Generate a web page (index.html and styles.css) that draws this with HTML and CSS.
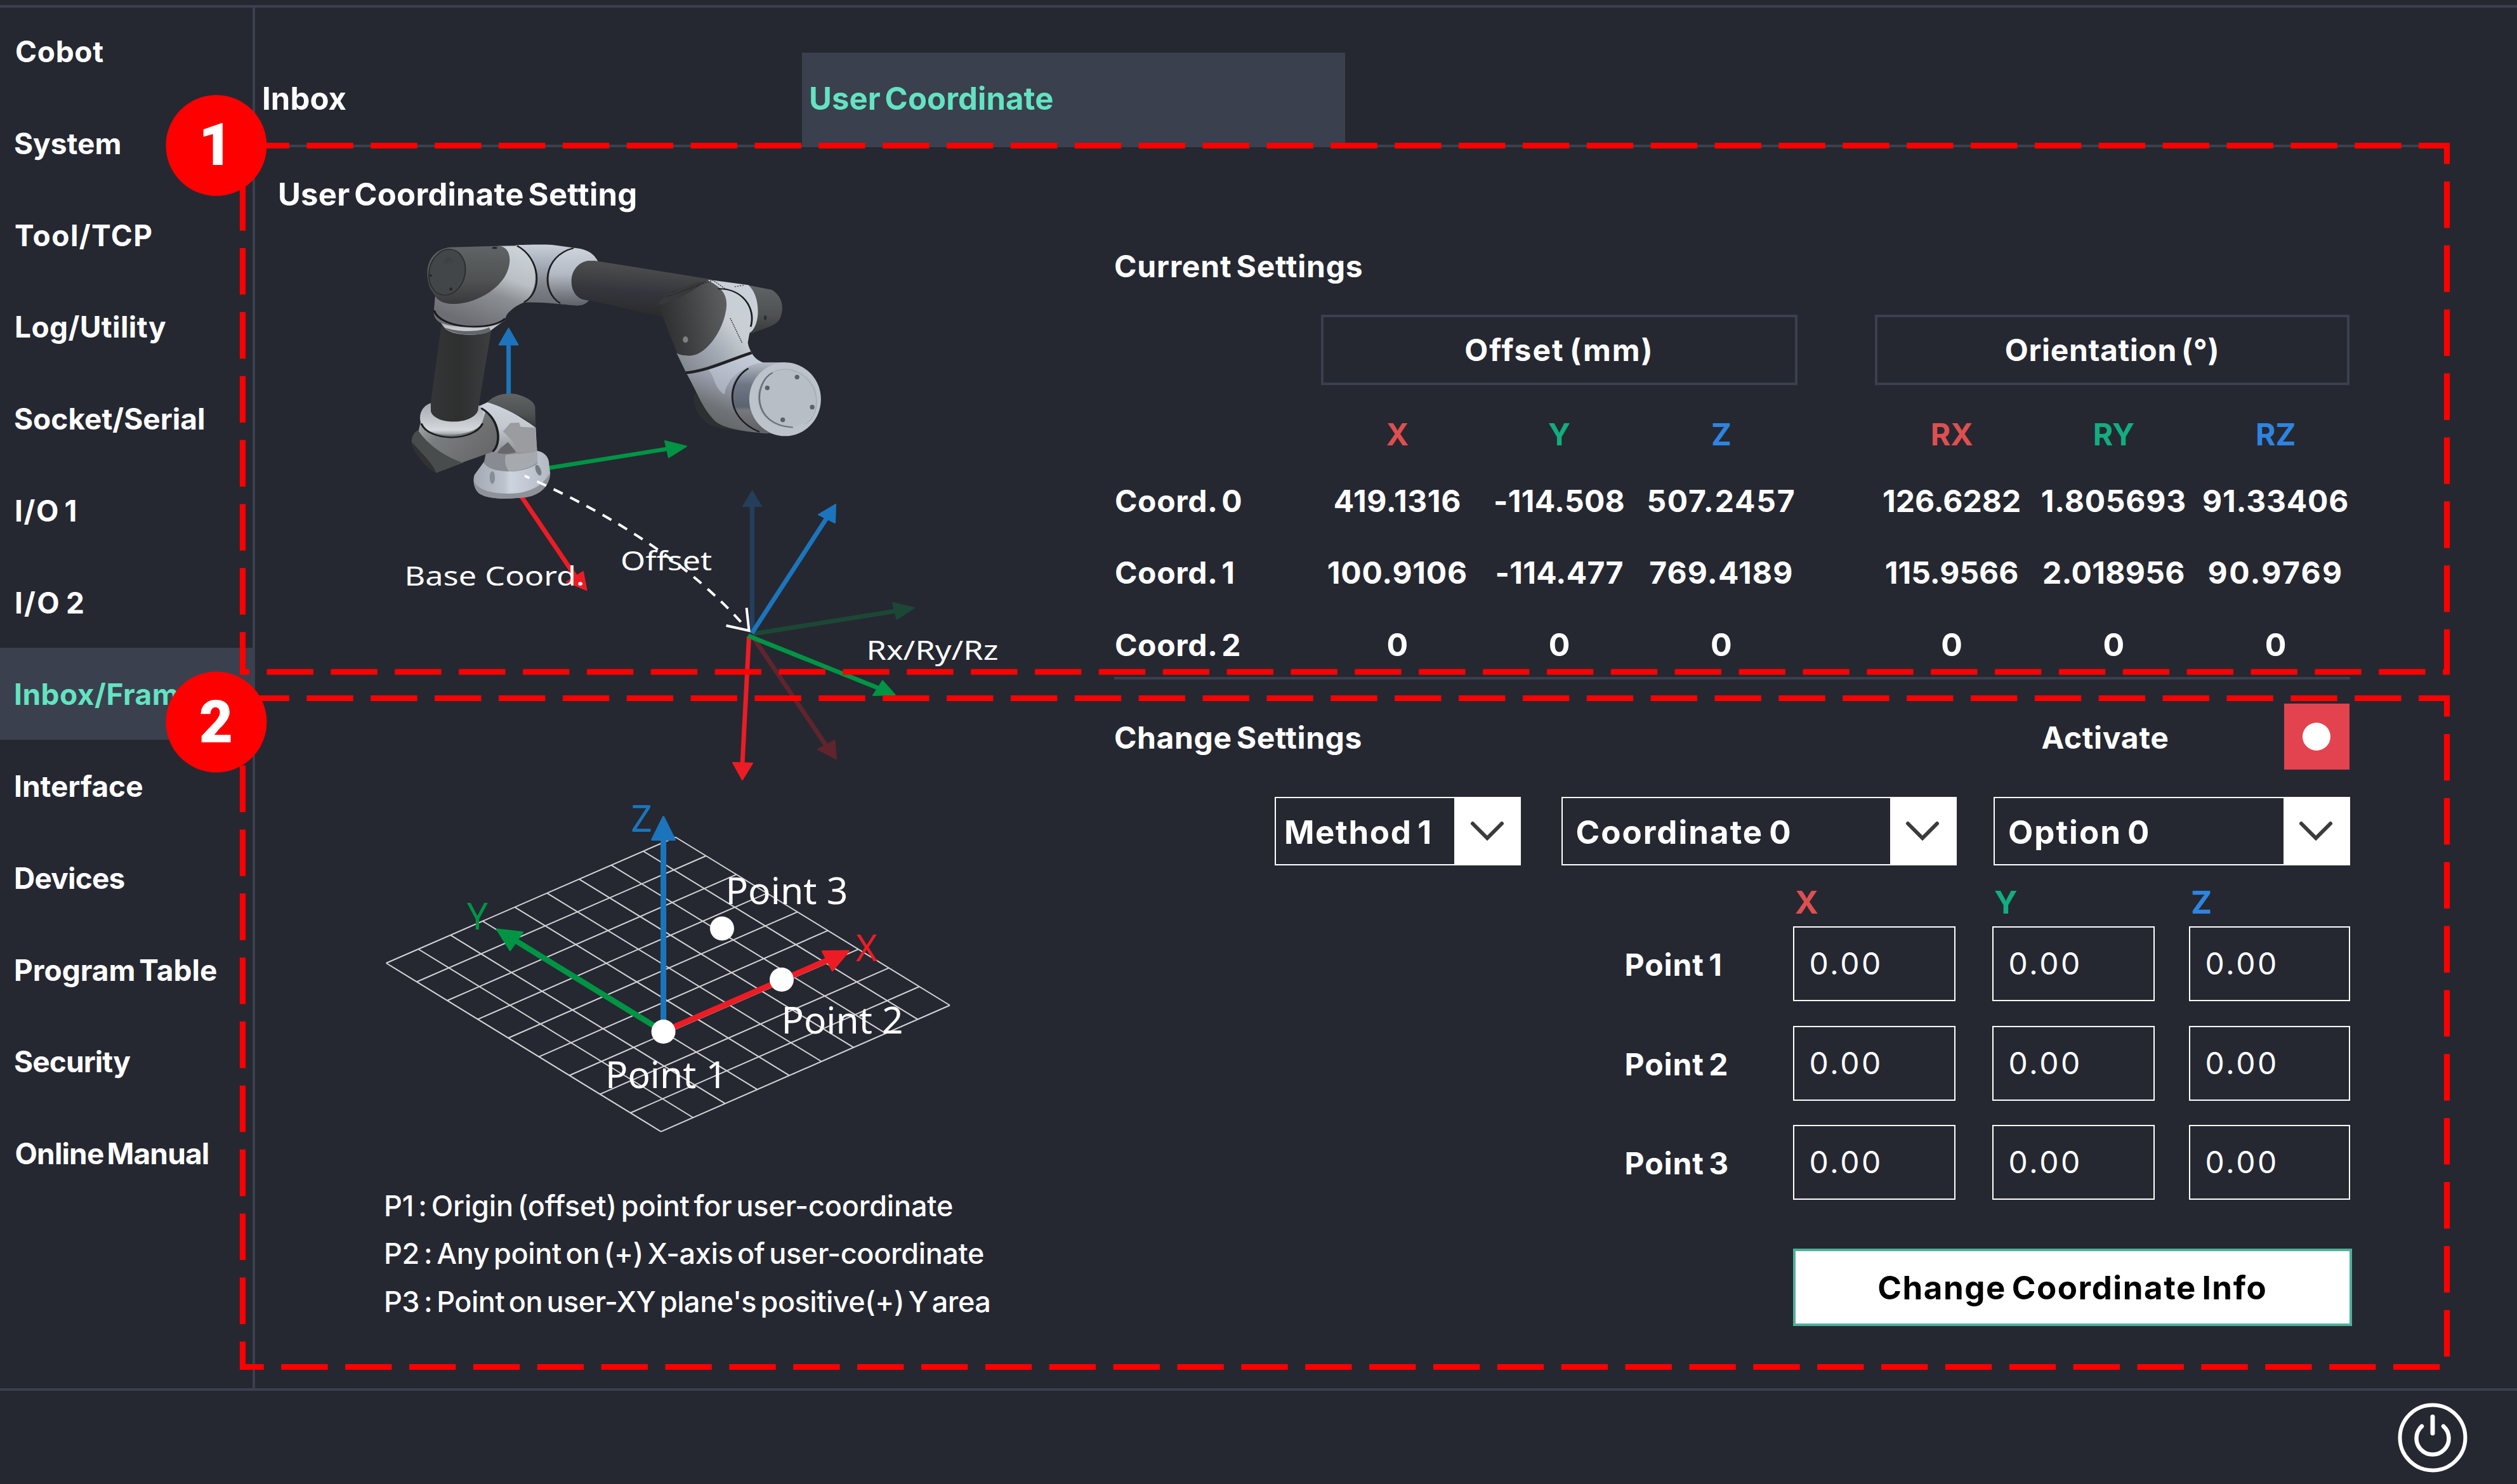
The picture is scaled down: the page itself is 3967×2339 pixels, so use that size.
FILE: index.html
```html
<!DOCTYPE html>
<html lang="en">
<head>
<meta charset="utf-8">
<title>User Coordinate Setting</title>
<link rel="stylesheet" href="styles.css">
</head>
<body>
<div class="topbar"></div>
<div class="main">
  <nav class="sidebar">
    <a>Cobot</a>
    <a>System</a>
    <a>Tool/TCP</a>
    <a>Log/Utility</a>
    <a>Socket/Serial</a>
    <a>I/O 1</a>
    <a>I/O 2</a>
    <a class="active">Inbox/Frame</a>
    <a>Interface</a>
    <a>Devices</a>
    <a>Program Table</a>
    <a>Security</a>
    <a>Online Manual</a>
  </nav>
  <section class="content">
    <div class="tabs">
      <div class="tab">Inbox</div>
      <div class="tab selected">User Coordinate</div>
    </div>
    <div class="panel">
      <div class="guide">
        <h1>User Coordinate Setting</h1>
        <svg class="frames" viewBox="402 340 1352 910" width="1352" height="910">
          <defs>
            <linearGradient id="tube" x1="0" y1="0" x2="1" y2="0"><stop offset="0" stop-color="#343637"/><stop offset=".45" stop-color="#2e2f2f"/><stop offset="1" stop-color="#3d3e3f"/></linearGradient>
            <linearGradient id="arm" x1=".55" y1="0" x2=".4" y2="1"><stop offset="0" stop-color="#505152"/><stop offset=".3" stop-color="#424345"/><stop offset=".55" stop-color="#34363d"/><stop offset="1" stop-color="#2a2a2b"/></linearGradient>
            <linearGradient id="joint" x1=".9" y1="0" x2=".45" y2="1"><stop offset="0" stop-color="#cfd6da"/><stop offset=".4" stop-color="#b9bfc4"/><stop offset=".62" stop-color="#8b8e92"/><stop offset="1" stop-color="#6c6e73"/></linearGradient>
            <linearGradient id="barrel" x1="0" y1="0" x2="0" y2="1"><stop offset="0" stop-color="#c9cfd8"/><stop offset=".3" stop-color="#aab0bb"/><stop offset=".7" stop-color="#7c8087"/><stop offset="1" stop-color="#6a6d72"/></linearGradient>
            <linearGradient id="collar" x1="0" y1="0" x2="0" y2="1"><stop offset="0" stop-color="#cdd3da"/><stop offset=".45" stop-color="#b4bac4"/><stop offset=".8" stop-color="#7b7e86"/><stop offset="1" stop-color="#606268"/></linearGradient>
            <linearGradient id="cap" x1="0" y1="0" x2="0" y2="1"><stop offset="0" stop-color="#606466"/><stop offset=".6" stop-color="#4f5152"/><stop offset="1" stop-color="#37393a"/></linearGradient>
            <linearGradient id="capSide" x1="0" y1=".6" x2="1" y2=".4"><stop offset="0" stop-color="#2b2c2d"/><stop offset=".45" stop-color="#3f4142"/><stop offset="1" stop-color="#5c5e60"/></linearGradient>
            <linearGradient id="wrist" x1="0" y1="1" x2="1" y2="0"><stop offset="0" stop-color="#7c8088"/><stop offset=".35" stop-color="#a3a9b3"/><stop offset=".6" stop-color="#c8ced3"/><stop offset="1" stop-color="#ccd2dc"/></linearGradient>
            <linearGradient id="hand" x1=".7" y1="0" x2=".3" y2="1"><stop offset="0" stop-color="#c6ced9"/><stop offset=".4" stop-color="#959ba8"/><stop offset=".7" stop-color="#6f7276"/><stop offset="1" stop-color="#5f6164"/></linearGradient>
            <linearGradient id="flange" x1="0" y1="0" x2="0" y2="1"><stop offset="0" stop-color="#b4bac5"/><stop offset=".3" stop-color="#6f7684"/><stop offset=".6" stop-color="#5c6370"/><stop offset=".65" stop-color="#76797d"/><stop offset="1" stop-color="#5a5c5f"/></linearGradient>
            <linearGradient id="ring" x1="0" y1="0" x2="0" y2="1"><stop offset="0" stop-color="#a6a9ad"/><stop offset=".6" stop-color="#c6cace"/><stop offset=".85" stop-color="#d5d8dc"/><stop offset="1" stop-color="#a0a3a6"/></linearGradient>
            <linearGradient id="shoulder" x1="0" y1="0" x2="1" y2=".6"><stop offset="0" stop-color="#b3b6ba"/><stop offset=".4" stop-color="#7a7d7f"/><stop offset="1" stop-color="#66686a"/></linearGradient>
            <linearGradient id="body" x1="0" y1="0" x2="0" y2="1"><stop offset="0" stop-color="#cfd5dd"/><stop offset=".5" stop-color="#c3c8ce"/><stop offset="1" stop-color="#8c8f93"/></linearGradient>
            <linearGradient id="foot" x1="0" y1="0" x2="1" y2="0"><stop offset="0" stop-color="#a4a9b2"/><stop offset=".4" stop-color="#bcc3cd"/><stop offset=".48" stop-color="#ccd4df"/><stop offset="1" stop-color="#b3b9c3"/></linearGradient>
          </defs>

          <!-- base frame axes -->
          <path d="M801.6 625V540" stroke="#1c75bc" stroke-width="7"/>
          <path d="M801.6 517.500L816.500 543.500H786.700Z" fill="#1c75bc" stroke="#1c75bc" stroke-width="2" stroke-linejoin="round"/>
          <path d="M862 738L1052 707.500" stroke="#009444" stroke-width="6.500"/>
          <path d="M1082 703.500L1048 695L1054 721Z" fill="#009444" stroke="#009444" stroke-width="2" stroke-linejoin="round"/>
          <path d="M820 780L908 910" stroke="#ed1c24" stroke-width="7"/>
          <path d="M924.500 930L919 901L893 917Z" fill="#ed1c24" stroke="#ed1c24" stroke-width="2" stroke-linejoin="round"/>

          <!-- robot arm -->
          <g transform="translate(600 350) scale(.4592 .3333)">
            <path fill="url(#tube)" d="M210 470L382 490L335 880C325 960 185 960 172 895V850Z"/>
            <path fill="url(#ring)" d="M200 465L222 505C255 542 350 542 378 512L428 462Z"/>
            <path fill="#63666a" d="M216 497C250 542 350 542 378 512L372 498C340 522 260 520 216 497Z"/>
            <path fill="url(#joint)" d="M404 113L470 112C545 160 550 320 494 378C465 395 445 415 432 440L426 462C360 505 240 500 205 476C188 462 182 445 182 425L187 350Z"/>
            <path fill="url(#barrel)" d="M462 110C500 106 560 106 590 108L665 122C715 128 733 155 746 187L712 183C640 200 640 340 692 366L714 372C700 390 690 396 665 394C610 388 560 378 494 380C545 320 550 170 462 110Z"/>
            <path fill="url(#collar)" d="M650 124C715 125 733 155 746 187L712 183C640 200 640 340 692 366L714 372C700 390 690 396 665 394L620 388C560 330 560 170 650 124Z"/>
            <path fill="none" stroke="#1b1c1e" stroke-width="6" d="M468 112C548 170 558 330 492 379M662 123C555 160 550 330 616 384"/>
            <path fill="none" stroke="#1b1c1e" stroke-width="8" d="M183 418C205 510 385 515 427 456"/>
            <path fill="url(#cap)" d="M238 119L408 113C450 120 452 200 425 260C385 345 300 392 245 387C215 385 195 370 187 350L170 315C140 200 180 128 238 119Z"/>
            <ellipse cx="228" cy="237" rx="62" ry="109" fill="#424648" stroke="#2a2c2d" stroke-width="4" transform="rotate(6 228 237)"/>
            <g fill="#242626"><ellipse cx="391" cy="122" rx="9" ry="5"/><ellipse cx="241" cy="317" rx="5" ry="7"/><ellipse cx="172" cy="253" rx="4" ry="6"/></g>
            <path fill="none" stroke="#2f3233" stroke-width="3" stroke-dasharray="4 5" d="M218 190C222 165 242 160 248 190M224 196L232 175L242 196"/>

            <path fill="url(#arm)" d="M712 183H735L1130 270L1000 330L962 446C880 425 800 392 690 363C640 335 640 200 712 183Z"/>
            <path fill="url(#cap)" d="M1255 297L1342 320C1368 340 1380 375 1378 415C1374 465 1362 480 1330 497L1266 530C1300 470 1302 350 1255 297Z"/>
            <path fill="url(#wrist)" d="M1125 272L1262 298C1305 350 1305 490 1266 525L1260 570C1262 590 1268 605 1274 620L1048 712L1016 620L1100 400Z"/>
            <path fill="url(#capSide)" d="M1120 274C1165 305 1188 335 1187 395C1182 500 1120 632 1060 632C1040 632 1028 628 1018 622L952 392C975 350 1050 295 1120 274Z"/>
            <path fill="#37393a" d="M952 392C962 345 1060 290 1122 275C1085 310 1030 370 952 392Z"/>
            <path fill="none" stroke="#1d1e20" stroke-width="3" stroke-dasharray="5 4" d="M985 352L1140 275L1185 318M1200 455L1240 570M1215 306L1250 298"/>
            <path fill="none" stroke="#1b1c1e" stroke-width="6" d="M1158 316C1235 310 1290 400 1270 495"/>
            <ellipse cx="1046" cy="556" rx="9" ry="15" fill="#7d8082"/>
            <ellipse cx="1320" cy="452" rx="5" ry="11" fill="#2c2e2f"/>
            <path fill="#2d3030" d="M1078 810C1070 860 1080 900 1112 940C1130 968 1170 980 1240 988L1160 880Z"/>
            <path fill="url(#hand)" d="M1048 712L1274 620C1282 640 1295 655 1312 664L1330 1000C1240 990 1165 975 1140 930C1100 870 1085 800 1048 712Z"/>
            <path fill="#c5ccd8" opacity=".55" d="M1120 690L1260 630L1310 664C1230 690 1190 740 1180 815C1140 780 1150 730 1120 690Z"/>
            <path fill="none" stroke="#202225" stroke-width="13" d="M1047 713C1125 702 1190 655 1273 618"/>
            <path fill="url(#flange)" d="M1312 664C1215 680 1190 790 1210 880C1225 940 1260 975 1300 992L1400 1012L1390 664Z"/>
            <path fill="none" stroke="#1b1c1e" stroke-width="6" d="M1262 692C1190 750 1175 920 1300 993"/>
            <ellipse cx="1388" cy="838" rx="123" ry="174" fill="#bdc3cb"/>
            <ellipse cx="1395" cy="833" rx="103" ry="139" fill="#b7bec6"/>
            <path fill="none" stroke="#a4a9b1" stroke-width="3" d="M1345 710C1400 670 1470 720 1490 800C1505 870 1490 930 1455 955"/>
            <path fill="none" stroke="#6a6f78" stroke-width="6" d="M1345 712C1280 760 1270 960 1415 971"/>
            <g fill="#5d6064"><ellipse cx="1429" cy="733" rx="8" ry="11"/><ellipse cx="1327" cy="784" rx="8" ry="11"/><ellipse cx="1481" cy="875" rx="8" ry="11"/><ellipse cx="1380" cy="935" rx="8" ry="11"/></g>

            <path fill="url(#foot)" d="M360 1085L538 1082C565 1088 578 1115 578 1145L582 1190C578 1250 540 1300 480 1303C400 1315 350 1300 335 1280C318 1255 316 1220 322 1195L362 1120Z"/>
            <path fill="#8f9399" d="M320 1225C335 1275 400 1290 470 1282C530 1270 565 1230 581 1185C584 1250 540 1303 480 1304C400 1315 350 1300 335 1280C325 1262 320 1245 320 1225Z"/>
            <path fill="#888b92" d="M362 1088H538V1140C520 1165 470 1185 425 1178C395 1175 370 1168 354 1140Z"/>
            <path fill="#b4b6bb" opacity=".7" d="M430 1100L538 1085V1135C520 1160 480 1178 440 1178C425 1150 425 1120 430 1100Z"/>
            <ellipse cx="383" cy="1208" rx="9" ry="30" fill="#888d95"/>
            <ellipse cx="541" cy="1173" rx="9" ry="26" fill="#777c82" transform="rotate(-14 541 1173)"/>
            <path fill="url(#body)" d="M335 872L370 850C430 880 480 920 532 972L537 1084C500 1098 420 1098 380 1088Z"/>
            <path fill="#9a9c9f" d="M420 990L445 950L475 948L480 968L530 972L537 1084C510 1094 480 1092 460 1085C470 1050 440 1020 420 990Z"/>
            <path fill="#66686b" d="M412 1068L437 1040L465 1088C440 1098 420 1098 400 1092Z"/>
            <path fill="url(#cap)" d="M366 852C395 810 440 805 470 815C505 830 528 850 530 875L532 970C490 920 420 875 366 852Z"/>
            <path fill="#494c4c" d="M127 985C108 1000 103 1030 108 1055C125 1110 160 1165 192 1186L285 1137L200 1060Z"/>
            <path fill="#303232" d="M108 1040C130 1080 180 1140 190 1184C160 1165 125 1110 108 1055Z"/>
            <path fill="url(#shoulder)" d="M130 988L136 950L350 940L360 895C415 950 412 1050 385 1086L280 1137C220 1110 160 1050 130 988Z"/>
            <path fill="url(#ring)" d="M172 856C130 875 128 940 145 970C185 1020 310 1020 346 955C360 905 350 875 336 866L334 890C315 962 185 960 172 895Z"/>
            <path fill="none" stroke="#1b1c1e" stroke-width="7" d="M139 952C165 1040 320 1040 350 952"/>
            <path fill="none" stroke="#1b1c1e" stroke-width="8" d="M345 880C412 935 415 1050 384 1086"/>
          </g>

          <!-- rotated user frame -->
          <g fill="#243e5b" stroke="#243e5b"><path d="M1185.500 998V795" stroke-width="7.500"/><path d="M1185.500 774L1200 798H1171Z" stroke-width="2" stroke-linejoin="round"/></g>
          <g fill="#1c4736" stroke="#1c4736"><path d="M1187 999L1412 963" stroke-width="7"/><path d="M1441 958L1407 950L1413.500 976Z" stroke-width="2" stroke-linejoin="round"/></g>
          <g fill="#61242d" stroke="#61242d"><path d="M1188 1006L1304 1178" stroke-width="7"/><path d="M1318 1196L1315.500 1167L1289 1181Z" stroke-width="2" stroke-linejoin="round"/></g>
          <g fill="#ed1c24" stroke="#ed1c24"><path d="M1180.500 1003L1170 1205" stroke-width="7"/><path d="M1170 1229L1155 1202L1186 1203Z" stroke-width="2" stroke-linejoin="round"/></g>
          <g fill="#009444" stroke="#009444"><path d="M1179 1002L1388 1086" stroke-width="7"/><path d="M1410.500 1095L1391 1073L1376 1096Z" stroke-width="2" stroke-linejoin="round"/></g>
          <g fill="#1c75bc" stroke="#1c75bc"><path d="M1185 998L1304 815" stroke-width="7"/><path d="M1317 795L1290 811L1316 824Z" stroke-width="2" stroke-linejoin="round"/></g>
          <path d="M827 750Q1052 850 1171 984" fill="none" stroke="#fff" stroke-width="4" stroke-dasharray="16 13" stroke-dashoffset="8"/>
          <path d="M1176.600 958L1180.500 994L1144.500 986" fill="none" stroke="#fff" stroke-width="4"/>
          <g class="note">
            <text x="637.500" y="923" textLength="284" lengthAdjust="spacingAndGlyphs">Base Coord.</text>
            <text x="978" y="898.500" textLength="144" lengthAdjust="spacingAndGlyphs">Offset</text>
            <text x="1365.500" y="1040" textLength="208" lengthAdjust="spacingAndGlyphs">Rx/Ry/Rz</text>
          </g>
        </svg>
        <svg class="plane" viewBox="402 1250 1352 560" width="1352" height="560">
          <g stroke="#d4d4d6" stroke-width="2" fill="none">
            <path d="M608.700 1518L1064.700 1319.500M656.800 1547.500L1112.700 1349M704.900 1577L1160.700 1378.400M753.100 1606.500L1208.800 1407.800M801.200 1636L1256.800 1437.300M849.300 1665.600L1304.900 1466.700M897.400 1695L1352.900 1496.200M945.600 1724.600L1400.900 1525.600M993.700 1754L1449 1555M1041.800 1783.600L1497 1584.500"/>
            <path d="M608.700 1518L1041.800 1783.600M659.400 1496L1092.400 1761.500M710 1473.900L1143 1739.400M760.700 1451.800L1193.500 1717.200M811.400 1429.800L1244.100 1695.100M862 1407.700L1294.700 1673M912.700 1385.700L1345.300 1650.900M963.400 1363.600L1395.800 1628.700M1014 1341.600L1446.400 1606.600M1064.700 1319.500L1497 1584.500"/>
          </g>
          <g fill="#1c75bc" stroke="#1c75bc"><path d="M1045.600 1626V1320" stroke-width="9"/><path d="M1045.600 1287.500L1063.500 1323.500H1027.700Z" stroke-width="3" stroke-linejoin="round"/></g>
          <g fill="#009444" stroke="#009444"><path d="M1045.600 1626L810 1481" stroke-width="9"/><path d="M783.500 1465L823.500 1469.500L804 1497.500Z" stroke-width="3" stroke-linejoin="round"/></g>
          <g fill="#ed1c24" stroke="#ed1c24"><path d="M1045.600 1626L1305 1513" stroke-width="9"/><path d="M1337.500 1499L1296.500 1499.500L1312 1529.500Z" stroke-width="3" stroke-linejoin="round"/></g>
          <g fill="#fff"><circle cx="1045.600" cy="1626" r="19"/><circle cx="1232" cy="1544" r="19"/><circle cx="1138" cy="1463.500" r="19"/></g>
          <g class="mark">
            <text x="994.500" y="1311" fill="#1c75bc">Z</text>
            <text x="736" y="1465" fill="#009444">Y</text>
            <text x="1349" y="1515" fill="#ed1c24">X</text>
            <text x="1143.500" y="1425" textLength="193" lengthAdjust="spacingAndGlyphs">Point 3</text>
            <text x="1231.500" y="1629" textLength="192" lengthAdjust="spacingAndGlyphs">Point 2</text>
            <text x="954" y="1714.500" textLength="192" lengthAdjust="spacingAndGlyphs">Point 1</text>
          </g>
        </svg>
        <div class="legend">
          <p class="p1"><b>P1</b><b>:</b>Origin (offset) point for user-coordinate</p>
          <p class="p2"><b>P2</b><b>:</b>Any point on (+) X-axis of user-coordinate</p>
          <p class="p3"><b>P3</b><b>:</b>Point on user-XY plane's positive(+) Y area</p>
        </div>
      </div>

      <div class="settings">
        <h2 class="k9">Current Settings</h2>
        <div class="groups">
          <div class="group">Offset (mm)</div>
          <div class="group orient">Orientation (°)</div>
        </div>
        <div class="axes">
          <span class="name"></span>
          <div class="trio"><span class="x">X</span><span class="y">Y</span><span class="z">Z</span></div>
          <div class="trio"><span class="x">RX</span><span class="y">RY</span><span class="z">RZ</span></div>
        </div>
        <div class="rows">
          <div class="row">
            <span class="name">Coord. 0</span>
            <div class="trio"><span class="k6">419.1316</span><span class="k3">-114.508</span><span class="k18">507.2457</span></div>
            <div class="trio"><span class="k0">126.6282</span><span class="k9">1.805693</span><span class="k9">91.33406</span></div>
          </div>
          <div class="row">
            <span class="name">Coord. 1</span>
            <div class="trio"><span class="k9">100.9106</span><span class="k3">-114.477</span><span class="k12">769.4189</span></div>
            <div class="trio"><span class="k0">115.9566</span><span class="k3">2.018956</span><span class="k24">90.9769</span></div>
          </div>
          <div class="row">
            <span class="name">Coord. 2</span>
            <div class="trio zero"><span>0</span><span>0</span><span>0</span></div>
            <div class="trio zero"><span>0</span><span>0</span><span>0</span></div>
          </div>
        </div>
        <div class="divider"></div>

        <div class="change">
          <h2 class="k6">Change Settings</h2>
          <span class="activate">Activate</span>
          <span class="toggle"></span>
        </div>
        <div class="selects">
          <div class="select method"><span>Method 1</span><i><svg viewBox="0 0 60 40" width="60" height="40"><path d="M7 8L30 31L53 8"/></svg></i></div>
          <div class="select coord"><span>Coordinate 0</span><i><svg viewBox="0 0 60 40" width="60" height="40"><path d="M7 8L30 31L53 8"/></svg></i></div>
          <div class="select option"><span>Option 0</span><i><svg viewBox="0 0 60 40" width="60" height="40"><path d="M7 8L30 31L53 8"/></svg></i></div>
        </div>
        <div class="points">
          <span></span><b class="x">X</b><b class="y">Y</b><b class="z">Z</b>
          <label>Point 1</label><div class="field">0.00</div><div class="field">0.00</div><div class="field last">0.00</div>
          <label>Point 2</label><div class="field">0.00</div><div class="field">0.00</div><div class="field last">0.00</div>
          <label>Point 3</label><div class="field">0.00</div><div class="field">0.00</div><div class="field last">0.00</div>
        </div>
        <div class="submit">Change Coordinate Info</div>
      </div>
    </div>
  </section>
</div>
<footer>
  <svg class="power" viewBox="-56 -56 112 112" width="112" height="112">
    <circle r="51.500" stroke-width="6"/>
    <path d="M-17 -18A25.500 25.500 0 1 0 17 -18" stroke-width="6.500" stroke-linecap="round"/>
    <path d="M0 -33V-7" stroke-width="7" stroke-linecap="round"/>
  </svg>
</footer>
<svg class="callouts" viewBox="0 0 3967 2339" width="3967" height="2339">
  <g fill="none" stroke="#f00" stroke-width="9.170" stroke-dasharray="73.360 27.510">
    <path d="M382.500 229.500H3856.500V1059H382.500Z"/>
    <path d="M382.500 1100.500H3856.500V2154.500H382.500Z"/>
  </g>
  <g fill="#f00"><circle cx="340.900" cy="229.300" r="79.500"/><circle cx="340.900" cy="1138" r="79.500"/></g>
  <g class="number"><text x="340" y="260">1</text><text x="340.500" y="1170">2</text></g>
</svg>
</body>
</html>
```
FILE: styles.css
```css
* { box-sizing: border-box; margin: 0; }
:root { --bg: #252831; --line: #3a404e; --mint: #64e3c1; --red: #df4f50; --green: #12ad80; --blue: #2e84e0; }
body { position: relative; width: 3967px; height: 2339px; overflow: hidden; background: var(--bg); color: #fff; font: 660 48px Inter, sans-serif; white-space: nowrap; word-spacing: -5px; }
h1, h2, b { font-weight: 660; }
.x { color: var(--red); }
.y { color: var(--green); }
.z { color: var(--blue); }
.k0 { letter-spacing: 0; }
.k3 { letter-spacing: .3px; }
.k6 { letter-spacing: .6px; }
.k9 { letter-spacing: .8px; }
.k12 { letter-spacing: 1.2px; }
.k18 { letter-spacing: 1.8px; }
.k24 { letter-spacing: 2.4px; }

.topbar { height: 8px; }
.main { display: flex; height: 2180px; box-shadow: inset 0 4px 0 var(--line); }

.sidebar { display: flex; flex-direction: column; width: 402px; border-right: 4px solid var(--line); font-size: 46px; letter-spacing: 0; }
.sidebar a { height: 144.750px; line-height: 146px; padding-left: 22px; }
.sidebar .active { background: var(--line); color: var(--mint); letter-spacing: .5px; }
.sidebar a:nth-child(1) { letter-spacing: .7px; padding-left: 24px; }
.sidebar a:nth-child(3) { letter-spacing: 1.450px; padding-left: 23px; }
.sidebar a:nth-child(4) { letter-spacing: .4px; padding-left: 23px; }
.sidebar a:nth-child(6) { letter-spacing: 1.600px; padding-left: 23px; }
.sidebar a:nth-child(7) { letter-spacing: 2.200px; padding-left: 23px; }
.sidebar a:nth-child(10) { letter-spacing: -.8px; }
.sidebar a:nth-child(12) { letter-spacing: -.9px; }
.sidebar a:nth-child(13) { letter-spacing: -.850px; padding-left: 23.500px; }

.content { flex: 1; }
.tabs { display: flex; width: 3454px; height: 224px; padding-top: 75px; border-bottom: 4px solid var(--line); font-size: 49px; letter-spacing: .1px; line-height: 146px; }
.tab { width: 862px; padding-left: 11px; }
.tab.selected { width: 856px; background: var(--line); color: var(--mint); }

.panel { display: flex; }
.guide { width: 1354px; }
.guide h1 { margin: 45px 0 3px 36px; font-size: 49px; line-height: 60px; letter-spacing: .250px; }
.guide svg { display: block; }
.note { font: 450 42px "Noto Sans", "Open Sans", sans-serif; word-spacing: 0; fill: #fff; }
.mark { font: 450 58px "Noto Sans", "Open Sans", sans-serif; word-spacing: 0; fill: #fff; }
.legend { padding: 52.500px 0 0 203px; font-size: 45px; font-weight: 500; line-height: 75.500px; }
.legend b { font-weight: 500; margin-right: 7px; }
.p1 { letter-spacing: -.150px; }
.p2 { letter-spacing: -.350px; }
.p3 { letter-spacing: -.500px; }

.settings { width: 1948px; padding-top: 157.500px; }
.settings h2 { font-size: 48px; line-height: 60px; }
.groups { display: flex; gap: 122px; margin-top: 46.500px; padding-left: 326px; }
.group { width: 751px; height: 111px; border: 4px solid var(--line); line-height: 104px; text-align: center; letter-spacing: 2px; }
.group.orient { width: 748px; letter-spacing: .650px; }
.axes, .row { display: flex; }
.axes { height: 99.250px; margin-top: 26.500px; line-height: 101px; }
.name { flex: none; width: 318.750px; padding-left: 1px; letter-spacing: .6px; }
.trio { display: flex; flex: none; margin-right: 108px; }
.trio span { width: 255.250px; text-align: center; }
.rows { height: 334.250px; line-height: 113.500px; }
.zero { font-size: 50px; }
.divider { height: 4px; background: var(--line); }

.change { display: flex; height: 103.500px; margin: 38px 1.500px 0 0; line-height: 108px; }
.change h2 { flex: 1; line-height: 108px; }
.activate { margin-right: 181px; letter-spacing: .7px; }
.toggle { display: flex; align-items: center; justify-content: center; width: 103px; background: #e2434e; }
.toggle::before { content: ""; width: 44px; height: 44px; border-radius: 50%; background: #fff; }

.selects { display: flex; margin-top: 43.500px; padding-left: 253px; font-size: 51px; letter-spacing: 2px; }
.select { display: flex; justify-content: space-between; height: 108px; border: 2.500px solid #fff; line-height: 107px; }
.select i { display: flex; align-items: center; justify-content: center; width: 103px; background: #fff; }
.select path { fill: none; stroke: #3b3b3b; stroke-width: 6; stroke-linecap: round; }
.method { width: 388px; margin-right: 64px; padding-left: 13px; letter-spacing: 1.6px; }
.coord { width: 622.500px; margin-right: 58.500px; padding-left: 20.500px; }
.option { width: 561.500px; padding-left: 21px; }

.points { display: grid; grid-template-columns: 265.500px 314px 310px 254px; grid-template-rows: 68px 118px 118px 118px; row-gap: 38.500px; margin: 28px 0 0 804.500px; }
.points > :nth-child(-n+4) { height: 68px; }
.points b { padding-left: 3px; font-size: 50px; line-height: 61px; }
.points label { line-height: 121px; letter-spacing: .950px; }
.points .field, .points label { margin-top: -38.500px; margin-bottom: 38.500px; }
.field { width: 256px; height: 118px; border: 2.500px solid #fff; padding-left: 23.500px; font-size: 48px; font-weight: 420; line-height: 114px; letter-spacing: 3.5px; }
.field.last { width: 254px; }
.submit { width: 881.500px; height: 122px; margin: 38.500px 0 0 1069.500px; border: 4px solid #4fb199; background: #fff; color: #000; font-size: 51px; line-height: 115px; letter-spacing: 1.550px; text-align: center; }

footer { display: flex; justify-content: flex-end; height: 151px; padding: 18px 77px 0 0; border-top: 4px solid var(--line); }
.power { fill: none; stroke: #fff; }
.callouts { position: absolute; left: 0; top: 0; word-spacing: 0; }
.number { font: 900 92px Roboto, sans-serif; fill: #fff; text-anchor: middle; }
```
